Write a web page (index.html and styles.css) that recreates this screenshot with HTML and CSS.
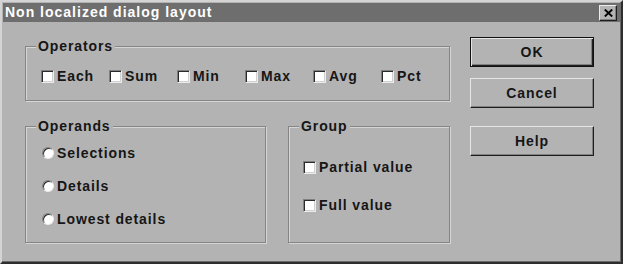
FILE: index.html
```html
<!DOCTYPE html>
<html lang="en">
<head>
    <meta charset="UTF-8">
    <title>Non localized dialog layout</title>
    <link rel="stylesheet" href="styles.css">
</head>
<body>
    <div class="window">
        <div class="titlebar">
            <span class="title">Non localized dialog layout</span>
            <button class="close" aria-label="Close">
                <svg width="9" height="8" viewBox="0 0 9 8">
                    <path d="M0.8 0.5 L8.2 7.5 M8.2 0.5 L0.8 7.5" stroke="#000" stroke-width="1.9" fill="none"/>
                </svg>
            </button>
        </div>

        <div class="dialog">
            <div class="options">
                <div class="group operators">
                    <span class="group-title">Operators</span>
                    <div class="check-row">
                        <label class="item"><span class="check"></span>Each</label>
                        <label class="item"><span class="check"></span>Sum</label>
                        <label class="item"><span class="check"></span>Min</label>
                        <label class="item"><span class="check"></span>Max</label>
                        <label class="item"><span class="check"></span>Avg</label>
                        <label class="item"><span class="check"></span>Pct</label>
                    </div>
                </div>

                <div class="lower">
                    <div class="group operands">
                        <span class="group-title">Operands</span>
                        <label class="item"><span class="radio"></span>Selections</label>
                        <label class="item"><span class="radio"></span>Details</label>
                        <label class="item"><span class="radio"></span>Lowest details</label>
                    </div>

                    <div class="group grouping">
                        <span class="group-title">Group</span>
                        <label class="item"><span class="check"></span>Partial value</label>
                        <label class="item"><span class="check"></span>Full value</label>
                    </div>
                </div>
            </div>

            <div class="buttons">
                <button class="btn btn-default">OK</button>
                <button class="btn cancel">Cancel</button>
                <button class="btn help">Help</button>
            </div>
        </div>
    </div>
</body>
</html>
```

FILE: styles.css
```css
body {
    margin: 0;
    background-color: #fff;
    font-family: "Liberation Sans", Arial, sans-serif;
    font-weight: bold;
    font-size: 14px;
    letter-spacing: 0.9px;
    color: #161616;
}
.window {
    box-sizing: border-box;
    width: 623px;
    height: 264px;
    padding: 1px;
    background-color: #b3b3b3;
    border: 2px solid;
    border-color: #d4d4d4 #2e2e2e #2e2e2e #d4d4d4;
    box-shadow: inset -1px -1px 0 #6a6a6a;
}
.titlebar {
    display: flex;
    justify-content: space-between;
    align-items: center;
    height: 19px;
    padding-left: 2px;
    background-color: #6e6e6e;
}
.title {
    color: #fff;
    line-height: 19px;
    letter-spacing: 1px;
}
.close {
    box-sizing: border-box;
    display: flex;
    justify-content: center;
    align-items: center;
    width: 18px;
    height: 16px;
    margin-right: 3px;
    padding: 0;
    background-color: #b3b3b3;
    border: 1px solid;
    border-color: #ececec #1e1e1e #1e1e1e #ececec;
    box-shadow: inset -1px -1px 0 #808080;
}
.dialog {
    display: flex;
    padding: 15px 0 0 22px;
}
.options {
    width: 425px;
    margin-top: 9px;
}
.group {
    box-sizing: border-box;
    position: relative;
    border: 1px solid #858585;
    box-shadow: inset 1px 1px 0 #d6d6d6, 1px 1px 0 #d6d6d6;
}
.group-title {
    position: absolute;
    top: -9px;
    left: 10px;
    padding: 0 2px;
    line-height: 16px;
    background-color: #b3b3b3;
}
.item {
    display: flex;
    align-items: center;
    line-height: 16px;
    white-space: nowrap;
}
.check {
    box-sizing: border-box;
    width: 13px;
    height: 13px;
    margin-right: 3px;
    background-color: #fff;
    border: 1px solid;
    border-color: #808080 #ececec #ececec #808080;
    box-shadow: inset 1px 1px 0 #2a2a2a, inset -1px -1px 0 #d0d0d0;
}
.radio {
    box-sizing: border-box;
    width: 12px;
    height: 12px;
    margin-right: 3px;
    border-radius: 50%;
    background-color: #fff;
    border: 1px solid;
    border-color: #808080 #ececec #ececec #808080;
    box-shadow: inset 1px 1px 0 #2a2a2a;
}
.operators {
    height: 55px;
    padding: 21px 0 0 15px;
}
.check-row {
    display: flex;
}
.check-row .item {
    width: 69.4px;
}
.lower {
    display: flex;
    gap: 22px;
    margin-top: 25px;
}
.operands {
    width: 241px;
    height: 117px;
    padding: 18px 0 0 16px;
}
.operands .item + .item {
    margin-top: 17px;
}
.grouping {
    width: 162px;
    height: 117px;
    padding: 32px 0 0 14px;
}
.grouping .item + .item {
    margin-top: 22px;
}
.buttons {
    display: flex;
    flex-direction: column;
    width: 124px;
    margin-left: 20px;
}
.btn {
    box-sizing: border-box;
    height: 30px;
    padding: 0;
    font-family: inherit;
    font-weight: bold;
    font-size: 14px;
    letter-spacing: 0.9px;
    color: #161616;
    background-color: #b3b3b3;
    border: 1px solid;
    border-color: #e6e6e6 #1e1e1e #1e1e1e #e6e6e6;
    box-shadow: inset -1px -1px 0 #808080;
}
.btn-default {
    border-color: #111;
    box-shadow: inset 1px 1px 0 #e6e6e6, inset -1px -1px 0 #1e1e1e, inset -2px -2px 0 #808080;
}
.cancel {
    margin-top: 11px;
}
.help {
    margin-top: 18px;
}
```
